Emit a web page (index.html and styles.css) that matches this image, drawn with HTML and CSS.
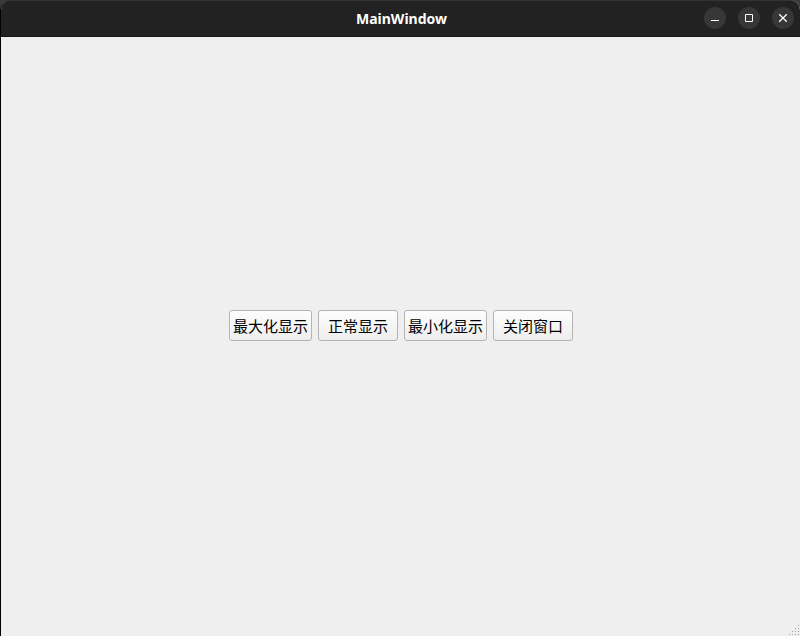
FILE: index.html
```html
<!DOCTYPE html>
<html lang="zh-CN">
<head>
<meta charset="utf-8">
<title>MainWindow</title>
<link rel="stylesheet" href="styles.css">
</head>
<body>
<div class="window">
  <header class="titlebar">
    <h1 class="title">MainWindow</h1>
    <div class="controls">
      <button class="control" type="button" aria-label="Minimize">
        <svg viewBox="0 0 22 22"><path d="M7 13h8v1H7z" fill="#fff"/></svg>
      </button>
      <button class="control" type="button" aria-label="Maximize">
        <svg viewBox="0 0 22 22"><path d="M7.500 7.500h7v7h-7z" fill="none" stroke="#fff"/></svg>
      </button>
      <button class="control" type="button" aria-label="Close">
        <svg viewBox="0 0 22 22"><path d="M7.200 7.200l7.600 7.600M14.800 7.200l-7.600 7.600" fill="none" stroke="#fff" stroke-width="1.300"/></svg>
      </button>
    </div>
  </header>
  <main class="content">
    <button class="action" type="button">最大化显示</button>
    <button class="action" type="button">正常显示</button>
    <button class="action" type="button">最小化显示</button>
    <button class="action" type="button">关闭窗口</button>
  </main>
  <footer class="statusbar">
    <svg class="grip" viewBox="0 0 12 12" aria-hidden="true">
      <path d="M10 1h1v1h-1zM7 4h1v1h-1zM10 4h1v1h-1zM4 7h1v1h-1zM7 7h1v1h-1zM10 7h1v1h-1zM1 10h1v1h-1zM4 10h1v1h-1zM7 10h1v1h-1zM10 10h1v1h-1z" fill="#a5a5a5"/>
    </svg>
  </footer>
</div>
</body>
</html>
```
FILE: styles.css
```css
* {
  box-sizing: border-box;
}

body {
  margin: 0;
  background: #3a3a3a;
}

.window {
  display: flex;
  flex-direction: column;
  min-height: 100vh;
  border-left: 1px solid #000;
  border-radius: 10px 10px 0 0;
  background: #efefef;
  overflow: hidden;
}

.titlebar {
  display: grid;
  grid-template-columns: 1fr auto 1fr;
  align-items: start;
  height: 37px;
  padding: 6px 6px 0 8px;
  background: #222;
  border-top: 1px solid #333;
  border-bottom: 1px solid #161616;
}

.title {
  grid-column: 2;
  margin: 0;
  color: #fff;
  font: 700 14px/24px "Noto Sans", "Open Sans", sans-serif;
}

.controls {
  display: flex;
  justify-content: flex-end;
  gap: 12px;
}

.control {
  width: 22px;
  height: 22px;
  padding: 0;
  border: 0;
  border-radius: 50%;
  background: #373737;
}

.control svg {
  display: block;
}

.content {
  flex: 1;
  display: flex;
  align-items: center;
  justify-content: center;
  gap: 6px;
  padding-left: 1px;
}

.action {
  min-width: 80px;
  height: 31px;
  padding: 0 3px;
  border: 1px solid #b4b4b4;
  border-radius: 3px;
  background: linear-gradient(#fdfdfd, #eee);
  color: #000;
  font: 15px/22px "Noto Sans CJK SC", sans-serif;
  white-space: nowrap;
}

.statusbar {
  display: flex;
  align-items: flex-end;
  justify-content: flex-end;
  height: 22px;
}

.grip {
  width: 12px;
  height: 12px;
}
```
